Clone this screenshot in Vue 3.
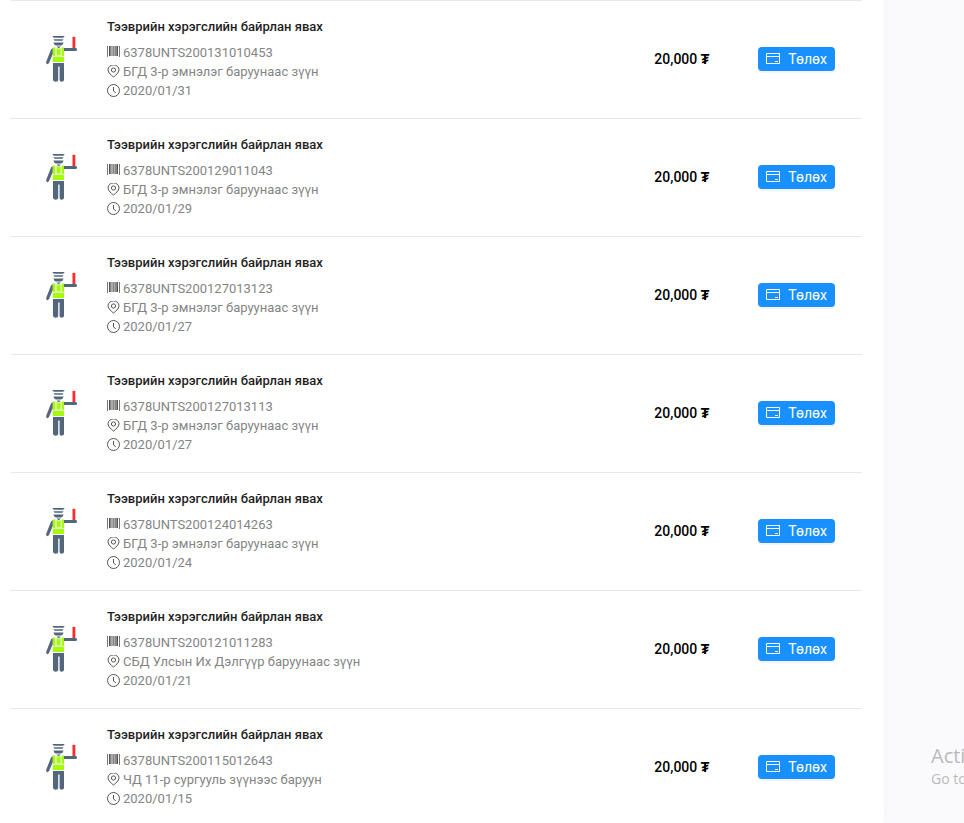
<script setup>
const title = 'Тээврийн хэрэгслийн байрлан явах'
const fines = [
  { code: '6378UNTS200131010453', place: 'БГД 3-р эмнэлэг баруунаас зүүн', date: '2020/01/31' },
  { code: '6378UNTS200129011043', place: 'БГД 3-р эмнэлэг баруунаас зүүн', date: '2020/01/29' },
  { code: '6378UNTS200127013123', place: 'БГД 3-р эмнэлэг баруунаас зүүн', date: '2020/01/27' },
  { code: '6378UNTS200127013113', place: 'БГД 3-р эмнэлэг баруунаас зүүн', date: '2020/01/27' },
  { code: '6378UNTS200124014263', place: 'БГД 3-р эмнэлэг баруунаас зүүн', date: '2020/01/24' },
  { code: '6378UNTS200121011283', place: 'СБД Улсын Их Дэлгүүр баруунаас зүүн', date: '2020/01/21' },
  { code: '6378UNTS200115012643', place: 'ЧД 11-р сургууль зүүнээс баруун', date: '2020/01/15' },
]
</script>

<template>
  <div class="page">
    <main class="panel">
      <ul class="list">
        <li v-for="fine in fines" :key="fine.code" class="row">
          <svg class="officer" viewBox="0 0 48 48" aria-hidden="true">
            <g fill="#53677c">
              <path d="M14.500 1h12q0 1.200-1.500 1.700h-9Q14.500 2.200 14.500 1zM15.500 4.200h10l-1 1.500h-8z" />
              <path d="M15.500 7.400h10q-.2 2.200-2.300 3.200h-5.400q-2.100-1-2.300-3.200z" />
              <path d="M18.600 11.500h4l-2 2z" />
              <path d="M25 13h13q1 .2 1 1.500T38 16H25z" />
              <path d="M14.800 13v6L11 28q-.8 1.500-2 1T8.200 26.800L12.600 15.500q.5-1.900 2.200-2.500z" />
              <path d="M15 28h11v17q-.2 1.700-2.300 1.700T21.600 45V31.500h-1.400V45q-.2 1.700-2.500 1.700T15 45z" />
            </g>
            <path d="M14.800 12.500h2.700v9h6.500v-9h2v14.500H14.800zM18.500 12.500l2.100 2 2.100-2v8H18.500z" fill="#a5fa0b" />
            <path d="M17.500 12.500v9h6v-9M14.800 21.500H26" fill="none" stroke="#dff8b8" stroke-width="1" />
            <path d="M34.500 2q1.400-.7 2.800 0v11h-2.800z" fill="#ff2b2e" />
          </svg>
          <div class="info">
            <h3 class="title">{{ title }}</h3>
            <p class="line">
              <svg class="icon" viewBox="0 0 13 13" aria-hidden="true">
                <path d="M0 0h1v11H0zM12 0h1v11h-1z" fill="#777" />
                <path d="M2 0h1v10H2zM10 0h1v10h-1z" fill="#555" />
                <path d="M3 0h1v10H3zM6 0h1v10H6zM8 0h2v10H8z" fill="#888" />
                <path d="M4 0h2v10H4zM7 0h1v10H7z" fill="#aaa" />
              </svg>
              <span>{{ fine.code }}</span>
            </p>
            <p class="line">
              <svg class="icon stroked" viewBox="0 0 13 13" aria-hidden="true">
                <path d="M6.500 12C4.500 10.300 1 7.900 1 4.800a5.500 4.900 0 0 1 11 0C12 7.900 8.500 10.300 6.500 12z" />
                <circle cx="6.500" cy="5" r="2.100" />
              </svg>
              <span>{{ fine.place }}</span>
            </p>
            <p class="line">
              <svg class="icon stroked" viewBox="0 0 13 13" aria-hidden="true">
                <circle cx="6.500" cy="6.500" r="6" />
                <path d="M6.500 3v4l2.300 1.700" />
              </svg>
              <span>{{ fine.date }}</span>
            </p>
          </div>
          <strong class="amount">20,000 <span class="currency">₮</span></strong>
          <button type="button" class="pay">
            <svg class="card" viewBox="0 0 14 12" aria-hidden="true">
              <path d="M.5.5h13v10H.5zM.5 3.500h13M9 8.500h3" />
            </svg>
            <span>Төлөх</span>
          </button>
        </li>
      </ul>
    </main>
    <aside class="side">
      <p class="notice">Acti</p>
      <p class="notice-sub">Go to</p>
    </aside>
  </div>
</template>

<style>
body {
  overflow: hidden;
}
</style>

<style scoped>
.page {
  display: flex;
  height: 100vh;
  overflow: hidden;
  background: #fafafc;
  font-family: Roboto, "Liberation Sans", sans-serif;
}
.panel {
  flex: 1;
  padding: 0 22px 0 11px;
  background: #fff;
  box-shadow: 0 0 8px rgba(40, 40, 70, 0.04);
}
.list {
  margin: 0;
  padding: 0;
  list-style: none;
}
.row {
  display: flex;
  align-items: center;
  box-sizing: border-box;
  height: 118px;
  padding: 0 27px 1px;
  border-top: 1px solid #e8e8e8;
}
.officer {
  width: 48px;
  height: 48px;
  margin-right: 21px;
}
.info {
  flex: 1;
  padding-bottom: 1px;
}
.title {
  margin: 0 0 6px;
  font-size: 13px;
  font-weight: 500;
  line-height: 20px;
  color: #1f1f1f;
}
.line {
  display: flex;
  gap: 3px;
  margin: 0;
  font-size: 13px;
  font-weight: 400;
  line-height: 19px;
  color: #848484;
}
.icon {
  width: 13px;
  height: 13px;
  margin-top: 3px;
}
.stroked {
  fill: none;
  stroke: #555;
}
.amount {
  width: 104px;
  font-size: 14px;
  font-weight: 500;
  line-height: 20px;
  color: #000;
}
.currency {
  font-weight: 700;
}
.pay {
  display: flex;
  align-items: center;
  gap: 8px;
  height: 24px;
  padding: 0 8px;
  border: 0;
  border-radius: 4px;
  background: #1890ff;
  box-shadow: 0 2px 0 rgba(0, 0, 0, 0.045);
  font-family: inherit;
  font-size: 14px;
  font-weight: 400;
  line-height: 24px;
  color: #fff;
  cursor: pointer;
}
.card {
  width: 14px;
  height: 12px;
  fill: none;
  stroke: #fff;
}
.side {
  display: flex;
  flex-direction: column;
  justify-content: flex-end;
  box-sizing: border-box;
  width: 80px;
  padding: 0 0 34px 47px;
  overflow: hidden;
  font-family: "Open Sans", "Noto Sans", sans-serif;
  white-space: nowrap;
  color: #bbb;
}
.notice {
  margin: 0;
  font-size: 20px;
  font-weight: 400;
  line-height: 26px;
}
.notice-sub {
  margin: 0;
  font-size: 14px;
  font-weight: 400;
  line-height: 20px;
}
</style>
